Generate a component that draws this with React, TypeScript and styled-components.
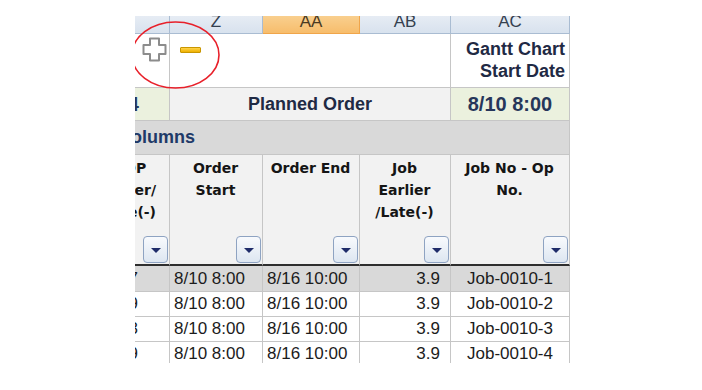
import React from 'react';
import styled, { createGlobalStyle } from 'styled-components';

const GlobalStyle = createGlobalStyle`
  html, body { margin: 0; padding: 0; background: #ffffff; }
  body { font-family: "Liberation Sans", Arial, sans-serif; }
`;

const COLS = '100px 93px 97px 91px 119px';
const GRID = '#c6c6c6';
const NAVY = '#1f2a44';

const Page = styled.div`
  width: 702px;
  height: 390px;
  box-sizing: border-box;
  padding: 16px 0 0 135px;
  overflow: hidden;
  background: #ffffff;
`;

const Viewport = styled.div`
  position: relative;
  width: 435px;
  height: 347px;
  overflow: hidden;
`;

const Sheet = styled.div`
  width: 500px;
  margin-left: -65px;
  display: flex;
  flex-direction: column;
`;

const Row = styled.div<{ $h: number }>`
  display: grid;
  grid-template-columns: ${COLS};
  height: ${(p) => p.$h}px;
`;

const LetterCell = styled.div<{ $active?: boolean }>`
  box-sizing: border-box;
  display: flex;
  justify-content: center;
  align-items: flex-start;
  overflow: hidden;
  font-size: 17px;
  line-height: 12px;
  color: ${(p) => (p.$active ? '#4a3a22' : '#34404f')};
  background: ${(p) =>
    p.$active
      ? 'linear-gradient(#f9cf8e, #f7bd6c)'
      : 'linear-gradient(#e6ecf4, #d8e2ee)'};
  border-right: 1px solid ${(p) => (p.$active ? '#f0a54a' : '#a9bcd2')};
  border-bottom: 1px solid ${(p) => (p.$active ? '#f0a54a' : '#a9bcd2')};
`;

const Cell = styled.div<{
  $span?: number;
  $bg?: string;
  $justify?: string;
  $align?: string;
}>`
  box-sizing: border-box;
  grid-column: span ${(p) => p.$span ?? 1};
  display: flex;
  justify-content: ${(p) => p.$justify ?? 'flex-start'};
  align-items: ${(p) => p.$align ?? 'center'};
  background: ${(p) => p.$bg ?? '#ffffff'};
  border-right: 1px solid ${GRID};
  border-bottom: 1px solid ${GRID};
  overflow: hidden;
`;

const IconCell = styled(Cell)`
  padding: 3px 2px 0 0;
`;

const MinusCell = styled(Cell)`
  padding: 13px 0 0 10px;
`;

const TitleText = styled.div`
  padding: 4px 4px 0 0;
  font-weight: bold;
  font-size: 18px;
  line-height: 22px;
  text-align: right;
  color: ${NAVY};
`;

const BandText = styled.span`
  font-weight: bold;
  font-size: 18px;
  color: ${NAVY};
`;

const DateText = styled.span<{ $inset?: number }>`
  font-size: 20px;
  font-weight: bold;
  color: #26365a;
  padding-right: ${(p) => p.$inset ?? 0}px;
  white-space: nowrap;
`;

const SectionText = styled.span`
  padding-left: 48px;
  font-weight: bold;
  font-size: 18px;
  color: #1f3a68;
  white-space: nowrap;
`;

const HeadCell = styled.div`
  box-sizing: border-box;
  display: flex;
  flex-direction: column;
  justify-content: space-between;
  padding: 2px 1px 1px 0;
  background: #f2f2f2;
  border-right: 1px solid ${GRID};
  border-bottom: 2px solid #2e2e2e;
  overflow: hidden;
`;

const HeadText = styled.div<{ $right?: boolean }>`
  font-family: "DejaVu Sans", Verdana, sans-serif;
  font-weight: bold;
  font-size: 14px;
  line-height: 22px;
  color: #151515;
  text-align: ${(p) => (p.$right ? 'right' : 'center')};
  padding-right: ${(p) => (p.$right ? 12 : 0)}px;
  white-space: nowrap;
`;

const FilterButton = styled.div`
  align-self: flex-end;
  box-sizing: border-box;
  width: 25px;
  height: 27px;
  display: flex;
  align-items: center;
  justify-content: center;
  border: 1px solid #8ea3c2;
  border-radius: 4px;
  background: linear-gradient(#f8fafd, #dde6f1);
  &::after {
    content: '';
    width: 0;
    height: 0;
    margin-top: 1px;
    border-left: 5px solid transparent;
    border-right: 5px solid transparent;
    border-top: 5px solid #1f2c6a;
  }
`;

const DataCell = styled(Cell)<{ $inset?: number }>`
  padding: 0 ${(p) => p.$inset ?? 4}px 0 4px;
  font-size: 17px;
  color: #1c1c1c;
  white-space: nowrap;
`;

const MinusBar = styled.span`
  display: block;
  width: 21px;
  height: 6px;
  box-sizing: border-box;
  border: 1px solid #c99600;
  border-radius: 1px;
  background: linear-gradient(#ffd34a, #eeb000);
`;

const Annotation = styled.svg`
  position: absolute;
  left: -3px;
  top: 4px;
  pointer-events: none;
`;

const PlusIcon = () => (
  <svg width="25" height="25" viewBox="0 0 25 25">
    <path
      d="M8 1.5h9v6.5h6.5v9H17v6.5H8V17H1.5V8H8z"
      fill="#ffffff"
      stroke="#8c8c8c"
      strokeWidth="2"
      strokeLinejoin="round"
    />
  </svg>
);

type DataRow = { lead: string; start: string; end: string; early: string; job: string };

const rows: DataRow[] = [
  { lead: '0.7', start: '8/10 8:00', end: '8/16 10:00', early: '3.9', job: 'Job-0010-1' },
  { lead: '0.9', start: '8/10 8:00', end: '8/16 10:00', early: '3.9', job: 'Job-0010-2' },
  { lead: '0.3', start: '8/10 8:00', end: '8/16 10:00', early: '3.9', job: 'Job-0010-3' },
  { lead: '0.9', start: '8/10 8:00', end: '8/16 10:00', early: '3.9', job: 'Job-0010-4' },
];

const headers: { lines: string[]; right?: boolean }[] = [
  { lines: ['OP\u00a0\u00a0', 'Earlier/', 'Late(-)'], right: true },
  { lines: ['Order', 'Start'] },
  { lines: ['Order End'] },
  { lines: ['Job', 'Earlier', '/Late(-)'] },
  { lines: ['Job No - Op', 'No.'] },
];

export default function App() {
  return (
    <Page>
      <GlobalStyle />
      <Viewport>
        <Sheet>
          <Row $h={18}>
            <LetterCell />
            <LetterCell>Z</LetterCell>
            <LetterCell $active>AA</LetterCell>
            <LetterCell>AB</LetterCell>
            <LetterCell>AC</LetterCell>
          </Row>
          <Row $h={54}>
            <IconCell $justify="flex-end" $align="flex-start">
              <PlusIcon />
            </IconCell>
            <MinusCell $span={3} $align="flex-start">
              <MinusBar />
            </MinusCell>
            <Cell $justify="flex-end" $align="flex-start">
              <TitleText>
                Gantt Chart
                <br />
                Start Date
              </TitleText>
            </Cell>
          </Row>
          <Row $h={33}>
            <Cell $bg="#ebf1de" $justify="flex-end">
              <DateText $inset={30}>8/14</DateText>
            </Cell>
            <Cell $span={3} $bg="#f2f2f2" $justify="center">
              <BandText>Planned Order</BandText>
            </Cell>
            <Cell $bg="#ebf1de" $justify="center">
              <DateText>8/10 8:00</DateText>
            </Cell>
          </Row>
          <Row $h={34}>
            <Cell $span={5} $bg="#d9d9d9">
              <SectionText>Columns</SectionText>
            </Cell>
          </Row>
          <Row $h={111}>
            {headers.map((h, i) => (
              <HeadCell key={i}>
                <HeadText $right={h.right}>
                  {h.lines.map((l, j) => (
                    <div key={j}>{l}</div>
                  ))}
                </HeadText>
                <FilterButton />
              </HeadCell>
            ))}
          </Row>
          {rows.map((r, i) => {
            const bg = i === 0 ? '#d9d9d9' : '#ffffff';
            return (
              <Row key={i} $h={i === 0 ? 26 : 25}>
                <DataCell $bg={bg} $justify="flex-end" $inset={31}>
                  {r.lead}
                </DataCell>
                <DataCell $bg={bg}>{r.start}</DataCell>
                <DataCell $bg={bg}>{r.end}</DataCell>
                <DataCell $bg={bg} $justify="flex-end" $inset={10}>
                  {r.early}
                </DataCell>
                <DataCell $bg={bg} $justify="center">
                  {r.job}
                </DataCell>
              </Row>
            );
          })}
        </Sheet>
        <Annotation width="90" height="70" viewBox="0 0 90 70">
          <ellipse cx="43.5" cy="35" rx="43.5" ry="33" fill="none" stroke="#e8202a" strokeWidth="1.6" />
        </Annotation>
      </Viewport>
    </Page>
  );
}
